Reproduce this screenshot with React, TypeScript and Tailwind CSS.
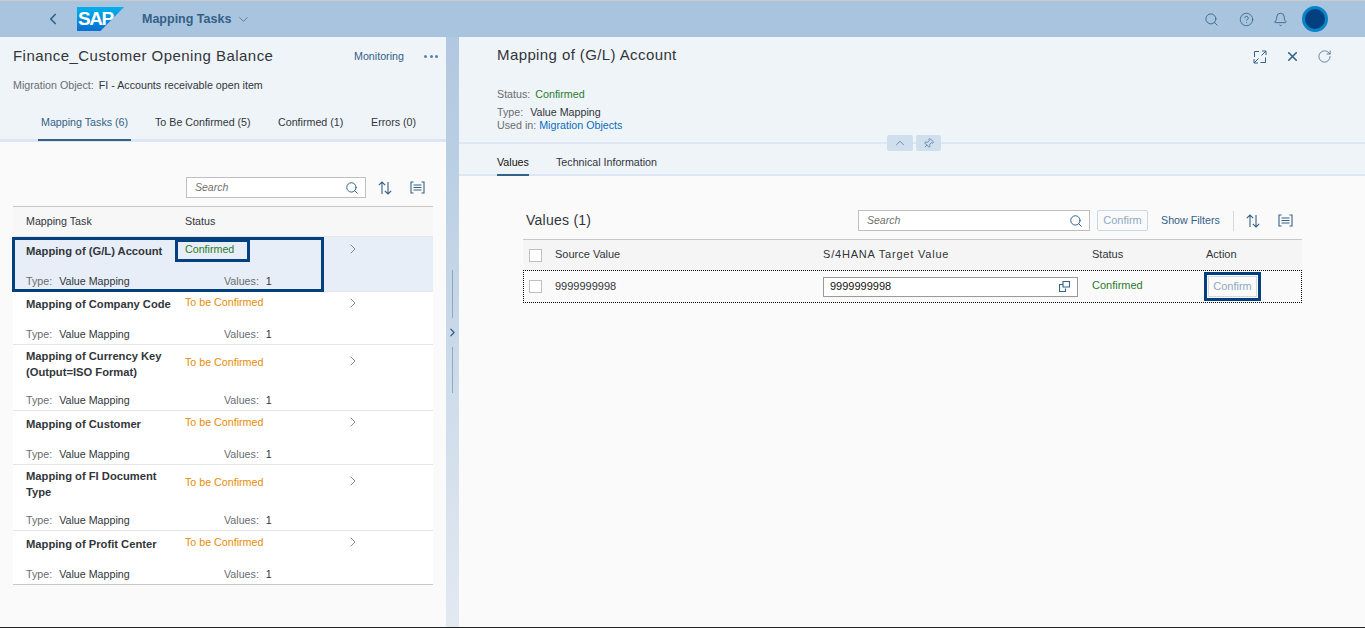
import { ChevronDown, ChevronLeft, ChevronRight, ChevronUp, Search, CircleHelp, Bell, X, RotateCw, Pin } from "lucide-react";

const tasks = [
  { name: ["Mapping of (G/L) Account"], status: "Confirmed", row: "h-[55px] pt-[6px] bg-[#e7eef7] border-b-[#e5e5e5]", statusCls: "-mt-[1px]", chevCls: "-mt-[2px]", typeCls: "mt-[15px]" },
  { name: ["Mapping of Company Code"], status: "To be Confirmed", row: "h-[53px] pt-[4px] bg-white border-b-[#e5e5e5]", statusCls: "-mt-[1px]", chevCls: "-mt-[1px]", typeCls: "mt-[15px]" },
  { name: ["Mapping of Currency Key", "(Output=ISO Format)"], status: "To be Confirmed", row: "h-[66px] pt-[3px] bg-white border-b-[#e5e5e5]", statusCls: "pt-[7px]", chevCls: "pt-[5px]", typeCls: "mt-[13px]" },
  { name: ["Mapping of Customer"], status: "To be Confirmed", row: "h-[54px] pt-[5px] bg-white border-b-[#e5e5e5]", statusCls: "-mt-[1px]", chevCls: "-mt-[2px]", typeCls: "mt-[15px]" },
  { name: ["Mapping of FI Document", "Type"], status: "To be Confirmed", row: "h-[66px] pt-[3px] bg-white border-b-[#e5e5e5]", statusCls: "pt-[7px]", chevCls: "pt-[5px]", typeCls: "mt-[13px]" },
  { name: ["Mapping of Profit Center"], status: "To be Confirmed", row: "h-[54px] pt-[5px] bg-white border-b-[#c8c8c8]", statusCls: "-mt-[1px]", chevCls: "-mt-[2px]", typeCls: "mt-[15px]" },
];

function SortIcon() {
  return (
    <svg width="16" height="16" viewBox="0 0 16 16" fill="none" stroke="#346187" strokeWidth="1.1">
      <path d="M5 14V2M1.8 5.2 5 2l3.2 3.2M11 2v12M7.8 10.8 11 14l3.2-3.2" />
    </svg>
  );
}

function SettingsIcon() {
  return (
    <svg width="15" height="13" viewBox="0 0 15 13" fill="none" stroke="#346187" strokeWidth="1.1">
      <path d="M3.5 1H1v11h2.5M11.5 1H14v11h-2.5M3.5 4h8M3.5 6.5h8M3.5 9h8" />
    </svg>
  );
}

function SearchBox({ width }: { width: string }) {
  return (
    <div className={`${width} h-[21px] bg-white border border-[#bfbfbf] flex items-center justify-between pl-2 pr-[6px]`}>
      <span className="italic text-[10.5px] text-[#707070]">Search</span>
      <Search size={14} strokeWidth={1.7} color="#346187" />
    </div>
  );
}

function TaskRow({ task }: { task: (typeof tasks)[number] }) {
  return (
    <div className={`${task.row} border-b pl-[13px]`}>
      <div className="flex">
        <div className="w-[159px] font-bold text-[11.2px] leading-[16px] text-[#32363a]">
          {task.name.map((line) => (
            <div key={line} className="whitespace-nowrap">{line}</div>
          ))}
        </div>
        <div className={`w-[160px] text-[10.7px] leading-[14px] ${task.statusCls} ${task.status === "Confirmed" ? "text-[#2b7c2b]" : "text-[#e78c07]"}`}>
          {task.status}
        </div>
        <div className={task.chevCls}>
          <ChevronRight size={16} strokeWidth={1.2} color="#6a6d70" />
        </div>
      </div>
      <div className={`flex text-[10.7px] leading-[14px] ${task.typeCls}`}>
        <div className="w-[198px] whitespace-nowrap">
          <span className="text-[#6a6d70]">Type:</span>
          <span className="ml-[7px] text-[#32363a]">Value Mapping</span>
        </div>
        <div className="whitespace-nowrap">
          <span className="text-[#6a6d70]">Values:</span>
          <span className="ml-[7px] text-[#32363a]">1</span>
        </div>
      </div>
    </div>
  );
}

function LeftPanel() {
  return (
    <div className="w-[446px] shrink-0 flex flex-col bg-[#fafafa]">
      <div className="h-[105px] bg-[#eff4f9] border-b-[3px] border-[#dce7f3]">
        <div className="flex items-center pl-[13px] pt-[8px] h-[26px] mt-[2px]">
          <div className="w-[341px] text-[15px] tracking-[0.45px] text-[#32363a] whitespace-nowrap">Finance_Customer Opening Balance</div>
          <div className="w-[70px] text-[10.7px] text-[#346187]">Monitoring</div>
          <div className="flex gap-[2.5px]">
            <span className="w-[3px] h-[3px] bg-[#5b81a3] rounded-full" />
            <span className="w-[3px] h-[3px] bg-[#5b81a3] rounded-full" />
            <span className="w-[3px] h-[3px] bg-[#5b81a3] rounded-full" />
          </div>
        </div>
        <div className="pl-[13px] mt-[13px] text-[10.7px] leading-[14px] whitespace-nowrap">
          <span className="text-[#6a6d70]">Migration Object:</span>
          <span className="ml-[5px] text-[#32363a]">FI - Accounts receivable open item</span>
        </div>
        <div className="flex mt-[16px] pl-[38px] h-[33px] text-[10.7px] text-[#32363a]">
          <div className="w-[93px] h-[33px] pl-[3px] pt-[6px] border-b-2 border-[#346187] text-[#346187] whitespace-nowrap">Mapping Tasks (6)</div>
          <div className="w-[123px] pl-[24px] pt-[6px] whitespace-nowrap">To Be Confirmed (5)</div>
          <div className="w-[92px] pl-[24px] pt-[6px] whitespace-nowrap">Confirmed (1)</div>
          <div className="pl-[25px] pt-[6px] whitespace-nowrap">Errors (0)</div>
        </div>
      </div>
      <div className="relative flex-1 pl-[13px] pr-[13px]">
        <div className="flex items-center h-[64px] pl-[173px] pt-[27px]">
          <SearchBox width="w-[180px]" />
          <div className="ml-[11px] w-[16px]"><SortIcon /></div>
          <div className="ml-[17px]"><SettingsIcon /></div>
        </div>
        <div className="flex items-center h-[31px] pl-[13px] border-t border-b border-t-[#c8c8c8] border-b-[#e5e5e5] bg-[#f7f7f7] text-[10.7px] text-[#32363a]">
          <div className="w-[159px]">Mapping Task</div>
          <div>Status</div>
        </div>
        {tasks.map((task) => (
          <TaskRow key={task.name[0]} task={task} />
        ))}
        <div className="absolute left-[12px] top-[95px] w-[312px] h-[55px] border-[3px] border-[#03407f]" />
        <div className="absolute left-[175px] top-[97px] w-[75px] h-[23px] border-[3px] border-[#03407f]" />
      </div>
    </div>
  );
}

function Splitter() {
  return (
    <div className="relative w-[13px] shrink-0 bg-gradient-to-b from-[#b0c8e0] to-[#e3e9f1] flex flex-col items-center pt-[233px]">
      <div className="w-px h-[48px] bg-[#346187] opacity-40" />
      <ChevronRight size={13} strokeWidth={2.2} color="#346187" className="my-[8px]" />
      <div className="w-px h-[46px] bg-[#346187] opacity-40" />
    </div>
  );
}

function RightPanel() {
  return (
    <div className="flex-1 flex flex-col bg-[#fafafa]">
      <div className="relative h-[107px] bg-[#eff4f9] border-b-2 border-[#dce7f3] pl-[38px]">
        <div className="flex items-start justify-between pr-[33px]">
          <div className="pt-[7px] text-[15px] leading-[22px] tracking-[0.4px] text-[#32363a] whitespace-nowrap">Mapping of (G/L) Account</div>
          <div className="flex items-center gap-[18px] pt-[12px]">
            <svg width="14" height="14" viewBox="0 0 14 14" fill="none" stroke="#346187" strokeWidth="1">
              <path d="M6 1.5H1.5V7M12.5 7.500V12.5H7.5M9 1H13V5M13 1 8.5 5.5M1 9V13H5M1 13 5.5 8.5" />
            </svg>
            <X size={15} strokeWidth={2.5} color="#346187" />
            <RotateCw size={15} strokeWidth={1.2} color="#346187" className="-ml-[1px]" />
          </div>
        </div>
        <div className="mt-[21px] text-[10.7px] leading-[14px] whitespace-nowrap">
          <span className="text-[#6a6d70]">Status:</span>
          <span className="ml-[5px] text-[#2b7c2b]">Confirmed</span>
        </div>
        <div className="mt-[4px] text-[10.7px] leading-[14px] whitespace-nowrap">
          <span className="text-[#6a6d70]">Type:</span>
          <span className="ml-[7px] text-[#32363a]">Value Mapping</span>
        </div>
        <div className="text-[10.7px] leading-[13px] whitespace-nowrap">
          <span className="text-[#6a6d70]">Used in:</span>
          <span className="ml-[3px] text-[#0a6ebd]">Migration Objects</span>
        </div>
        <div className="absolute left-[428px] top-[98px] flex gap-[3px]">
          <div className="w-[26px] h-[16px] bg-[#cfdfee] rounded-[2px] flex items-center justify-center">
            <ChevronUp size={14} strokeWidth={1.1} color="#346187" />
          </div>
          <div className="w-[25px] h-[16px] bg-[#cfdfee] rounded-[2px] flex items-center justify-center">
            <Pin size={11} strokeWidth={1.3} color="#346187" className="rotate-45" />
          </div>
        </div>
      </div>
      <div className="h-[32px] bg-[#eff4f9] border-b-2 border-[#dce7f3] flex pl-[38px] text-[10.7px] text-[#32363a]">
        <div className="h-[32px] w-[32px] pt-[10px] border-b-2 border-[#346187] text-[#111]">Values</div>
        <div className="ml-[27px] pt-[10px] whitespace-nowrap">Technical Information</div>
      </div>
      <div className="pl-[64px] pr-[63px]">
        <div className="flex items-center h-[63px] pt-[26px]">
          <div className="w-[335px] pl-[3px] text-[14px] tracking-[0.25px] text-[#32363a]">Values (1)</div>
          <SearchBox width="w-[232px]" />
          <div className="ml-[7px] w-[51px] h-[21px] border border-[#c6d9ea] rounded-[2px] flex items-center justify-center text-[11px] text-[#8ea9c0]">Confirm</div>
          <div className="ml-[13px] w-[72px] text-[10.7px] text-[#346187] whitespace-nowrap">Show Filters</div>
          <div className="w-px h-[20px] bg-[#d9d9d9]" />
          <div className="ml-[11px]"><SortIcon /></div>
          <div className="ml-[17px]"><SettingsIcon /></div>
        </div>
        <div className="flex items-center h-[31px] pb-[2px] border-t border-[#c8c8c8] bg-[#f5f5f5] text-[11px] text-[#32363a]">
          <div className="w-[32px] pl-[6px] pt-[2px]"><div className="w-[13px] h-[13px] bg-white border border-[#bfbfbf]" /></div>
          <div className="w-[268px]">Source Value</div>
          <div className="w-[269px] tracking-[0.8px] whitespace-nowrap">S/4HANA Target Value</div>
          <div className="w-[114px]">Status</div>
          <div>Action</div>
        </div>
        <div className="relative flex items-center h-[33px] border border-dotted border-black text-[11px] text-[#32363a]">
          <div className="w-[31px] pl-[5px]"><div className="w-[13px] h-[13px] bg-white border border-[#bfbfbf]" /></div>
          <div className="w-[268px]">9999999998</div>
          <div className="w-[269px]">
            <div className="w-[255px] h-[20px] bg-white border border-[#9a9a9a] pl-[6px] pr-[7px] flex items-center justify-between">
              <span className="text-[#111]">9999999998</span>
              <svg width="11" height="11" viewBox="0 0 11 11" fill="none" stroke="#346187" strokeWidth="1.1">
                <path d="M3.5 3.5H.5v7h6V7.5M4 .5h6.5V6H4z" />
              </svg>
            </div>
          </div>
          <div className="w-[114px] pb-[2px] text-[#2b7c2b]">Confirmed</div>
          <div className="absolute left-[680px] top-[1px] w-[57px] h-[29px] border-[3px] border-[#03407f] p-[1px]">
            <div className="w-full h-full border border-[#d9d9d9] flex items-center justify-center text-[#8ea9c0]">Confirm</div>
          </div>
        </div>
      </div>
    </div>
  );
}

export default function App() {
  return (
    <div className="h-[628px] overflow-hidden flex flex-col bg-[#fafafa] font-['Liberation_Sans',sans-serif] border-t border-b border-t-[#c9c9c9] border-b-[#222]">
      <div className="h-[36px] shrink-0 bg-[#a9c4df] flex items-center pl-[44px] pr-[37px]">
        <ChevronLeft size={18} strokeWidth={2.2} color="#346187" />
        <div className="relative ml-[15px] w-[47px] h-[24px]">
          <svg width="47" height="24" viewBox="0 0 47 24">
            <defs>
              <linearGradient id="sapBlue" x1="0" y1="0" x2="0" y2="1">
                <stop offset="0" stopColor="#00b1eb" />
                <stop offset="1" stopColor="#0a6ed1" />
              </linearGradient>
            </defs>
            <polygon points="0,0 47,0 23.5,24 0,24" fill="url(#sapBlue)" />
          </svg>
          <span className="absolute left-[1px] top-[1px] font-bold text-[19px] leading-[22px] text-white tracking-[-1.5px]">SAP</span>
        </div>
        <div className="ml-[18px] font-bold text-[12.5px] text-[#346187]">Mapping Tasks</div>
        <ChevronDown size={15} strokeWidth={1.1} color="#346187" className="ml-[5px]" />
        <div className="flex-1" />
        <Search size={15} strokeWidth={1.4} color="#346187" />
        <CircleHelp size={15} strokeWidth={1.3} color="#346187" className="ml-[20px]" />
        <Bell size={15} strokeWidth={1.4} color="#346187" className="ml-[19px]" />
        <div className="ml-[14px] w-[26px] h-[26px] rounded-full bg-[#03407f] border-[3px] border-[#0a84c8]" />
      </div>
      <div className="flex-1 flex min-h-0">
        <LeftPanel />
        <Splitter />
        <RightPanel />
      </div>
    </div>
  );
}
